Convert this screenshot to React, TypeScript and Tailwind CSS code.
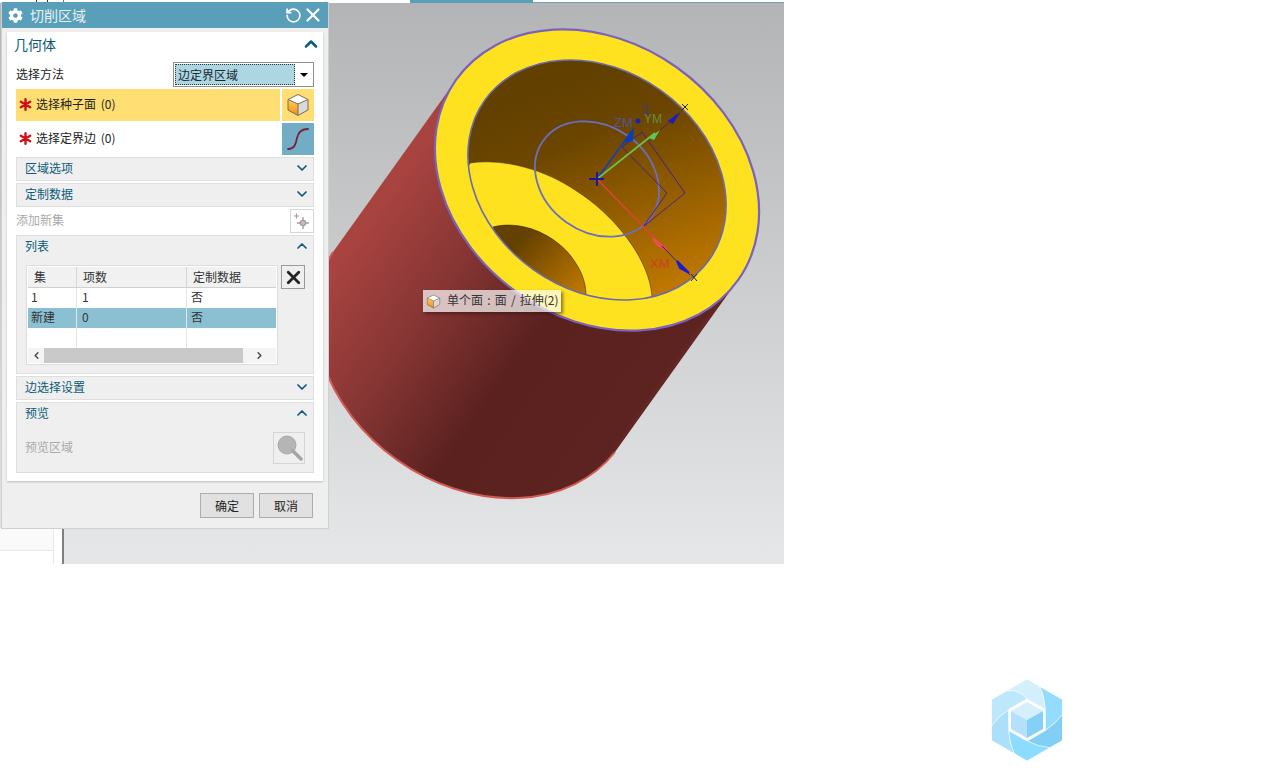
import React from "react";
import { ChevronDown, ChevronUp, ChevronLeft, ChevronRight, RotateCw, X } from "lucide-react";
import { FaCog } from "react-icons/fa";

const font = "[font-family:'Noto_Sans_CJK_SC','Liberation_Sans',sans-serif]";

function Cube({ size = 24 }: { size?: number }) {
  return (
    <svg width={size} height={size} viewBox="0 0 24 24">
      <defs>
        <linearGradient id="cubeL" x1="0" y1="0" x2="0" y2="1">
          <stop offset="0" stopColor="#ffd24a" />
          <stop offset="1" stopColor="#f08a1c" />
        </linearGradient>
      </defs>
      <path d="M12 11 L2 6.5 V17 L12 22.5 Z" fill="url(#cubeL)" />
      <path d="M12 11 L22 6.5 V17 L12 22.5 Z" fill="#d9d9d9" />
      <path d="M12 1.5 L22 6.5 L12 11 L2 6.5 Z" fill="#ffffff" />
      <path d="M12 1.5 L22 6.5 V17 L12 22.5 L2 17 V6.5 Z M2 6.5 L12 11 L22 6.5 M12 11 V22.5" fill="none" stroke="#7a6a5a" strokeWidth="1" strokeLinejoin="round" />
    </svg>
  );
}

function Star() {
  return (
    <span className="flex w-5 justify-center -translate-x-[1px] -translate-y-px">
      <svg width="13" height="13" viewBox="0 0 13 13" stroke="#d01018" strokeWidth="2.4" strokeLinecap="round">
        <path d="M6.5 1.2 V11.8 M1.8 3.8 L11.2 9.2 M11.2 3.8 L1.8 9.2" />
      </svg>
    </span>
  );
}

function Fold({ title, open = false }: { title: string; open?: boolean }) {
  return (
    <div className="flex h-[22px] items-center justify-between pl-[8px] pr-[3px] text-xs text-[#0b5c7a]">
      <span className="-translate-y-px">{title}</span>
      {open ? <ChevronUp size={16} strokeWidth={2.6} className="-translate-y-px text-[#0b5c7a]" /> : <ChevronDown size={16} strokeWidth={2.6} className="-translate-y-px text-[#0b5c7a]" />}
    </div>
  );
}

const rows = [
  { a: "1", b: "1", c: "否", sel: false },
  { a: "新建", b: "0", c: "否", sel: true },
  { a: "", b: "", c: "", sel: false },
];

function ListTable() {
  return (
    <div className="h-[100px] w-[252px] border border-[#dcdcdc] bg-white p-px text-xs text-[#333]">
      <div className="grid h-[21px] grid-cols-[49px_110px_1fr] border-b border-[#cfcfcf] bg-[#f1f1f1]">
        <span className="border-r border-[#d5d5d5] pl-[6px] leading-[19px]">集</span>
        <span className="border-r border-[#d5d5d5] pl-[6px] leading-[19px]">项数</span>
        <span className="pl-[6px] leading-[19px]">定制数据</span>
      </div>
      {rows.map((r, i) => (
        <div key={i} className={`grid h-[20px] grid-cols-[49px_110px_1fr] ${r.sel ? "bg-[#8bc0d3]" : "bg-white"}`}>
          <span className="border-r border-[#e6e6e6] pl-[3px] leading-[18px]">{r.a}</span>
          <span className="border-r border-[#e6e6e6] pl-[5px] leading-[18px]">{r.b}</span>
          <span className="pl-[4px] leading-[18px]">{r.c}</span>
        </div>
      ))}
      <div className="flex h-[15px] items-center bg-[#f4f4f4]">
        <div className="flex w-[16px] justify-center"><ChevronLeft size={11} strokeWidth={3} className="text-[#444]" /></div>
        <div className="h-full w-[199px] bg-[#c9c9c9]" />
        <div className="flex flex-1 justify-center"><ChevronRight size={11} strokeWidth={3} className="text-[#444]" /></div>
      </div>
    </div>
  );
}

function Dialog() {
  return (
    <div className={`absolute left-[1px] top-[2px] z-20 flex h-[527px] w-[328px] flex-col border-x border-b border-[#d0d0d0] bg-[#efefef] ${font}`}>
      <div className="flex h-[26px] shrink-0 items-center bg-[#5a9fb9] pl-[6px] pr-[4px] text-white">
        <FaCog size={15} className="text-white" />
        <span className="ml-[7px] flex-1 text-sm text-[#e6f2f6]">切削区域</span>
        <RotateCw size={17} strokeWidth={2.4} className="-scale-x-100" />
        <X size={22} strokeWidth={2.4} />
      </div>

      <div className="mx-[5px] mt-[4px] flex h-[449px] shrink-0 flex-col bg-white px-[9px] shadow-[0_1px_2px_#bbb]">
        <div className="flex h-[26px] shrink-0 items-center justify-between pb-[2px] text-sm text-[#0b5c7a]">
          <span className="-ml-[2px]">几何体</span>
          <ChevronUp size={20} strokeWidth={3} className="mr-[-7px]" />
        </div>
        <div className="mt-[4px] flex h-[25px] shrink-0 items-center justify-between text-xs text-[#222]">
          <span className="-translate-y-px">选择方法</span>
          <div className="flex h-[25px] w-[141px] items-center border border-[#8d8d8d] bg-white p-px">
            <div className="h-full w-[120px] border border-dotted border-[#333] bg-[#acd6e2] pl-[2px] leading-[19px] text-[#1a2a33]">边定界区域</div>
            <div className="flex flex-1 justify-center"><div className="h-0 w-0 border-x-[4px] border-t-[4px] border-x-transparent border-t-black" /></div>
          </div>
        </div>

        <div className="mt-[2px] flex h-[32px] shrink-0 justify-between">
          <div className="flex w-[264px] items-center bg-[#ffdf73] text-xs text-[#222]"><Star /><span className="-translate-y-px [word-spacing:2px]">选择种子面 (0)</span></div>
          <div className="flex w-[32px] items-center justify-center bg-[#ffdf73]"><Cube /></div>
        </div>
        <div className="mt-[2px] flex h-[32px] shrink-0 justify-between">
          <div className="flex w-[264px] items-center text-xs text-[#222]"><Star /><span className="-translate-y-px [word-spacing:2px]">选择定界边 (0)</span></div>
          <div className="flex w-[32px] items-center justify-center bg-[#72adc6]">
            <svg width="26" height="26" viewBox="0 0 26 26"><path d="M3 23 C10 23 11 17 12 12 C13 7 16 3 23 3" fill="none" stroke="#7a1f3a" strokeWidth="1.8" strokeLinecap="round" /></svg>
          </div>
        </div>

        <div className="mt-[2px] shrink-0 border border-[#dedede] bg-[#efefef]"><Fold title="区域选项" /></div>
        <div className="mt-[2px] shrink-0 border border-[#dedede] bg-[#efefef]"><Fold title="定制数据" /></div>

        <div className="flex h-[28px] shrink-0 items-center justify-between text-xs text-[#aaa]">
          <span className="-translate-y-px">添加新集</span>
          <div className="flex h-[24px] w-[24px] items-center justify-center border border-[#d5d5d5] bg-white">
            <svg width="18" height="18" viewBox="0 0 18 18" stroke="#a89ca0" strokeWidth="1.4" fill="none">
              <path d="M10 5 V17 M4 11 H16" /><circle cx="10" cy="11" r="2.6" fill="#c9c0c4" /><path d="M1 4 H6 M3.5 1.5 V6.5" strokeWidth="1.2" />
            </svg>
          </div>
        </div>

        <div className="flex h-[139px] shrink-0 flex-col border border-[#dedede] bg-[#efefef]">
          <Fold title="列表" open />
          <div className="ml-[9px] mt-[7px] flex items-start">
            <ListTable />
            <div className="ml-[3px] flex h-[24px] w-[24px] items-center justify-center border border-[#9a9a9a] bg-[#efefef]"><X size={21} strokeWidth={3.2} className="text-[#222]" /></div>
          </div>
        </div>

        <div className="mt-[2px] shrink-0 border border-[#dedede] bg-[#efefef]"><Fold title="边选择设置" /></div>

        <div className="mt-[2px] flex h-[71px] shrink-0 flex-col border border-[#dedede] bg-[#efefef]">
          <Fold title="预览" open />
          <div className="mt-[7px] flex items-center justify-between px-[8px] text-xs text-[#aaa]">
            <span className="-translate-y-px">预览区域</span>
            <div className="flex h-[32px] w-[32px] items-center justify-center border border-[#d5d5d5]">
              <svg width="28" height="28" viewBox="0 0 28 28"><circle cx="12" cy="11" r="9" fill="#b5b5b5" stroke="#a8a8a8" /><path d="M18 17 L26 25" stroke="#a5a5a5" strokeWidth="3.5" strokeLinecap="round" /></svg>
            </div>
          </div>
        </div>
      </div>

      <div className="mt-[12px] flex justify-end gap-[5px] pr-[15px] text-xs text-[#222]">
        <div className="flex h-[25px] w-[54px] items-center justify-center border border-[#adadad] bg-[#e1e1e1]">确定</div>
        <div className="flex h-[25px] w-[54px] items-center justify-center border border-[#adadad] bg-[#e1e1e1]">取消</div>
      </div>
    </div>
  );
}

function Scene() {
  const rot = "rotate(35.4 597 180)";
  return (
    <svg className="absolute left-0 top-0 z-0" width="784" height="564" viewBox="0 0 784 564">
      <defs>
        <linearGradient id="body" gradientUnits="userSpaceOnUse" x1="345" y1="255" x2="622" y2="450">
          <stop offset="0" stopColor="#a84340" />
          <stop offset="0.3" stopColor="#853533" />
          <stop offset="0.6" stopColor="#5a211f" />
          <stop offset="0.97" stopColor="#5c2321" />
          <stop offset="1" stopColor="#6a2c29" />
        </linearGradient>
        <linearGradient id="bore" gradientUnits="userSpaceOnUse" x1="520" y1="110" x2="720" y2="250">
          <stop offset="0" stopColor="#624000" />
          <stop offset="0.25" stopColor="#6c4600" />
          <stop offset="1" stopColor="#c67c00" />
        </linearGradient>
        <linearGradient id="pit" gradientUnits="userSpaceOnUse" x1="525" y1="235" x2="585" y2="290">
          <stop offset="0" stopColor="#644100" />
          <stop offset="1" stopColor="#c07800" />
        </linearGradient>
        <clipPath id="innerClip"><ellipse cx="597" cy="180" rx="137.7" ry="110" transform={rot} /></clipPath>
      </defs>

      <path d="M456 80 L333 252 A173 138 35.4 0 0 615 452 L738 280 Z" fill="url(#body)" />
      <path d="M333 252 A173 138 35.4 0 0 615 452" fill="none" stroke="#cf5a54" strokeWidth="2" />

      <ellipse cx="597" cy="180" rx="173" ry="138" transform={rot} fill="#ffe21f" stroke="#7a62bd" strokeWidth="2.2" />
      <ellipse cx="597" cy="180" rx="137.7" ry="110" transform={rot} fill="url(#bore)" />
      <g clipPath="url(#innerClip)">
        <path d="M470 163 C505 158 545 170 575 190 C615 215 650 260 652 297 L560 340 L430 250 Z" fill="#ffe21f" stroke="#4a3a10" strokeWidth="0.6" />
        <path d="M493 227 C520 220 552 233 570 255 C580 268 586 280 586 296 L520 290 Z" fill="url(#pit)" stroke="#3a2a05" strokeWidth="0.6" />
      </g>
      <ellipse cx="597" cy="180" rx="137.7" ry="110" transform={rot} fill="none" stroke="#6a6ab0" strokeWidth="1.6" />
      <ellipse cx="597" cy="179" rx="66" ry="53" transform="rotate(35.4 597 179)" fill="none" stroke="#6a6fc0" strokeWidth="1.8" />

      <g fill="none" strokeWidth="0.9" stroke="#3a1aa0">
        <path d="M622 147 L667 193 L643 227" />
        <path d="M642 132 L685 193 L643 227" />
        <path d="M622 147 L642 132" />
      </g>
      <path d="M597 179 L632 131" stroke="#1c3fb0" strokeWidth="2" />
      <path d="M623 143 L634 127 L633 141 Z" fill="#0a3db8" />
      <circle cx="638" cy="121" r="2.5" fill="#1a22b0" />
      <path d="M597 179 L655 133" stroke="#70c050" strokeWidth="1.6" />
      <path d="M649 138 L660 130 L654 140 Z" fill="#58c860" />
      <path d="M660 130 L680 114" stroke="#3a1aa0" strokeWidth="1" strokeDasharray="2 1" />
      <path d="M668 121 L680 112 L673 124 Z" fill="#1a1ad0" />
      <path d="M682 104 L688 110 M688 104 L682 110" stroke="#222" strokeWidth="1" />
      <path d="M643 106 H649 L643 113 H649" stroke="#3a30c0" strokeWidth="0.9" fill="none" />
      <path d="M597 179 L662 246" stroke="#e0413c" strokeWidth="1.5" />
      <path d="M653 238 L667 250 L657 245 Z" fill="#e8504a" stroke="#e8504a" strokeWidth="2" />
      <path d="M662 246 L690 275" stroke="#3a1aa0" strokeWidth="1" />
      <path d="M677 261 L689 273 L680 268 Z" fill="#1a1ad0" stroke="#1a1ad0" strokeWidth="2" />
      <path d="M691 274 L697 281 M697 274 L691 281" stroke="#222" strokeWidth="1" />
      <path d="M589 179 H604 M597 172 V186" stroke="#1a1aa0" strokeWidth="2" />
      <text x="614" y="127" fontSize="13" fontFamily="Liberation Sans" fill="#5058b8" opacity="0.85">ZM</text>
      <text x="644" y="123" fontSize="12" fontFamily="Liberation Sans" fill="#62a850" opacity="0.75">YM</text>
      <text x="650" y="268" fontSize="13" fontFamily="Liberation Sans" fill="#d0382f" opacity="0.85">XM</text>
    </svg>
  );
}

function Logo() {
  const fills = ["#d3effc", "#93dcfd", "#82cff5", "#8bdcff", "#abdffa", "#bde8fb"];
  return (
    <svg width="72" height="84" viewBox="-36 -42 72 84">
      {fills.map((f, i) => (
        <path key={i} transform={`rotate(${i * 60})`} d="M-23 -27.7 L0 -41 L15 -32.3 Q23 -22 18.5 -10.5 L0 -21 Q-12 -27 -23 -27.7 Z" fill={f} stroke="#fff" strokeWidth="0.7" />
      ))}
      <path d="M0 -18 L16 -9 L0 0 L-16 -9 Z" fill="#d5effd" />
      <path d="M-16 -9 L0 0 V18 L-16 9 Z" fill="#b5e0fd" />
      <path d="M16 -9 L0 0 V18 L16 9 Z" fill="#85d0f7" />
    </svg>
  );
}

export default function App() {
  return (
    <div className={`flex h-[774px] w-[1274px] flex-col overflow-hidden bg-white ${font}`}>
      <div className="relative h-[564px] w-[784px] shrink-0 bg-gradient-to-b from-[#b3b4b5] to-[#e6e7e8]">
        <div className="absolute left-0 top-0 z-10 flex h-[3px] w-[784px] bg-white">
          <div className="ml-[36px] h-[2px] w-[12px] border-x border-[#333]" />
          <div className="ml-[15px] h-[2px] w-px bg-[#777]" />
          <div className="ml-[346px] h-[3px] w-[123px] bg-[#5a9fb9]" />
          <div className="h-px flex-1 self-end bg-[#6da3b5]" />
        </div>
        <div className="absolute left-0 top-[528px] z-10 h-[36px] w-[64px] border-r-2 border-[#808080] bg-white">
          <div className="h-full w-[54px] border-r border-[#e8e8e8]">
            <div className="h-[23px] w-[53px] border-b border-[#e8e8e8] bg-[#fafafa]" />
          </div>
        </div>
        <Scene />
        <Dialog />
        <div className="absolute left-[423px] top-[290px] z-10 flex h-[22px] w-[138px] items-center bg-white/70 pl-[3px] text-xs text-[#333] shadow-[2px_2px_3px_rgba(50,20,20,0.55)]">
          <Cube size={15} />
          <span className="ml-[6px] -translate-y-px whitespace-nowrap [word-spacing:1.5px]">单个面 : 面 / 拉伸(2)</span>
        </div>
      </div>
      <div className="flex justify-start pl-[991px] pt-[114px]">
        <Logo />
      </div>
    </div>
  );
}
